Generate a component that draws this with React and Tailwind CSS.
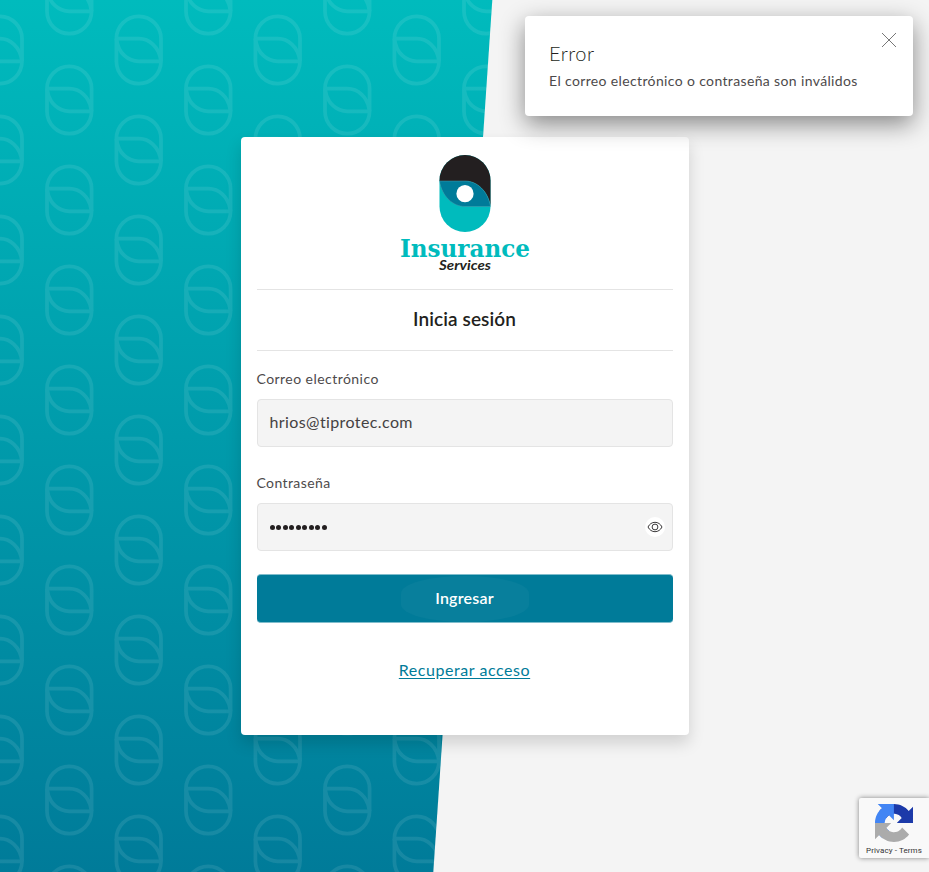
import React from "react";

function Link({ x, y }) {
  return (
    <g transform={`translate(${x} ${y})`}>
      <rect x="-22.3" y="-33.6" width="44.6" height="67.2" rx="22.3" />
      <path d="M-22.3 -11.3H0C10 -11.3 20.5 -4 22.3 11.3" />
      <path d="M22.3 11.3H0C-10 11.3 -20.5 4 -22.3 -11.3" />
    </g>
  );
}

function Backdrop() {
  return (
    <svg className="absolute inset-0 h-full w-full" viewBox="0 0 929 872" preserveAspectRatio="none" aria-hidden="true">
      <defs>
        <linearGradient id="teal" x1="0" y1="0" x2="0" y2="1">
          <stop offset="0" stopColor="#00bbbd" />
          <stop offset="1" stopColor="#007b99" />
        </linearGradient>
        <pattern id="links" x="0" y="0" width="139" height="100" patternUnits="userSpaceOnUse">
          <g fill="none" stroke="#fff" strokeWidth="3.7">
            <Link x={-0.3} y={50} />
            <Link x={138.7} y={50} />
            <Link x={69.3} y={0} />
            <Link x={69.3} y={100} />
          </g>
        </pattern>
      </defs>
      <path d="M0 0H492.300L433.300 872H0Z" fill="url(#teal)" />
      <path d="M0 0H492.300L433.300 872H0Z" fill="url(#links)" opacity="0.09" />
    </svg>
  );
}

function Logo() {
  return (
    <svg className="mx-auto block overflow-visible" width="134" height="120" viewBox="0 0 134 120" role="img" aria-label="Insurance Services">
      <defs>
        <clipPath id="pill">
          <rect x="41.500" y="2" width="51" height="77" rx="25.500" />
        </clipPath>
      </defs>
      <g clipPath="url(#pill)">
        <rect x="41" y="2" width="52" height="77" fill="#00bbbd" />
        <path d="M41 2H93V53.500C90 38 79 28 67 28H41Z" fill="#231f20" />
        <path d="M41 28H67C79 28 90 38 92.500 53.500H67C55 53.500 44 43.500 41.500 28Z" fill="#007b99" stroke="#4a9fae" strokeWidth="0.500" />
      </g>
      <circle cx="67" cy="40.700" r="8.600" fill="#fff" />
      <text x="2" y="104" textLength="130" lengthAdjust="spacingAndGlyphs" fill="#00bbbd" className="font-['DejaVu_Serif',serif] text-[25px] font-bold">Insurance</text>
      <text x="41" y="117" textLength="52" lengthAdjust="spacingAndGlyphs" fill="#231f20" className="font-['Lato',sans-serif] text-[12.5px] font-bold italic">Services</text>
    </svg>
  );
}

function EyeIcon() {
  return (
    <svg width="16" height="12" viewBox="0 0 16 12" fill="none" stroke="#3c3a3b" strokeWidth="1">
      <path d="M1 6C2.500 3 5 1.300 8 1.300S13.500 3 15 6C13.500 9 11 10.700 8 10.700S2.500 9 1 6Z" />
      <circle cx="8" cy="6" r="2.900" />
    </svg>
  );
}

function Toast() {
  return (
    <div className="absolute top-4 right-4 z-20 h-[100px] w-[388px] rounded bg-white px-6 pt-[23px] text-[#231f20] shadow-[0_8px_24px_rgba(0,0,0,0.45)]">
      <h2 className="text-[20px] leading-7 font-light tracking-[0.5px]">Error</h2>
      <p className="mt-px text-[14px] leading-[26px] whitespace-nowrap text-[#4d4a4b] tracking-[0.36px]">El correo electrónico o contraseña son inválidos</p>
      <button className="absolute top-4 right-4" aria-label="Cerrar">
        <svg width="16" height="16" viewBox="0 0 16 16" stroke="#777" strokeWidth="1">
          <path d="M1 1L15 15M15 1L1 15" />
        </svg>
      </button>
    </div>
  );
}

function Recaptcha() {
  return (
    <div className="absolute right-0 bottom-[14px] flex h-[60px] w-[70px] flex-col items-center rounded-l-[2px] bg-[#f9f9f9] pt-[6px] shadow-[0_0_5px_gray]">
      <svg width="38" height="38" viewBox="0 0 64 64">
        <path fill="#1c3aa9" d="M64 31.955l-.033-1.370V4.687l-7.160 7.160C50.948 4.674 42.033.093 32.050.093c-10.389 0-19.622 4.960-25.458 12.640l11.736 11.860a15.550 15.550 0 0 1 4.754-5.334c2.050-1.600 4.952-2.906 8.968-2.906.485 0 .860.057 1.135.163 4.976.393 9.288 3.140 11.828 7.124l-8.307 8.307L64 31.953" />
        <path fill="#4285f4" d="M31.862.094l-1.370.033H4.594l7.160 7.160C4.580 13.147 0 22.060 0 32.046c0 10.390 4.960 19.622 12.640 25.458L24.500 45.768a15.550 15.550 0 0 1-5.334-4.754c-1.600-2.050-2.906-4.952-2.906-8.968 0-.485.057-.860.163-1.135.393-4.976 3.140-9.288 7.124-11.828l8.307 8.307L31.860.095" />
        <path fill="#ababab" d="M.001 32.045l.033 1.370v25.898l7.160-7.160c5.860 7.173 14.774 11.754 24.760 11.754 10.390 0 19.622-4.960 25.458-12.640l-11.736-11.860a15.550 15.550 0 0 1-4.754 5.334c-2.050 1.600-4.952 2.906-8.968 2.906-.485 0-.860-.057-1.135-.163-4.976-.393-9.288-3.140-11.828-7.124l8.307-8.307c-10.522.040-22.400.066-27.295-.005" />
      </svg>
      <p className="mt-[3px] font-['Roboto',sans-serif] text-[8px] leading-[12px] tracking-[0.1px] whitespace-nowrap text-[#333]">Privacy - Terms</p>
    </div>
  );
}

export default function App() {
  return (
    <div className="relative flex h-screen w-screen items-center justify-center overflow-hidden bg-[#f4f4f4] font-['Lato',sans-serif]">
      <Backdrop />
      <main className="relative h-[598px] w-[448px] rounded bg-white px-4 pt-4 text-[#231f20] shadow-[0_8px_16px_rgba(0,0,0,0.15)]">
        <header className="h-[137px] border-b border-[#e4e4e4]">
          <Logo />
        </header>
        <h1 className="flex h-[61px] items-center justify-center border-b border-[#e4e4e4] pb-[2px] text-[19px] font-semibold tracking-[0.1px]">Inicia sesión</h1>
        <form className="flex flex-col">
          <span className="mt-4 text-[14px] leading-6 tracking-[0.45px] text-[#4d4a4b]">Correo electrónico</span>
          <div className="mt-2 flex h-12 items-center rounded border border-[#e4e4e4] bg-[#f4f4f4] px-3 pb-[2px] text-[16px] tracking-[0.4px] text-[#444142]">
            hrios@tiprotec.com
          </div>
          <span className="mt-6 text-[14px] leading-6 tracking-[0.4px] text-[#4d4a4b]">Contraseña</span>
          <div className="mt-2 flex h-12 items-center justify-between rounded border border-[#e4e4e4] bg-[#f4f4f4] pr-[7px] pl-3">
            <span className="flex gap-[1.450px] pl-[0.5px]" aria-label="Contraseña oculta">
              {Array.from({ length: 9 }, (_, i) => (
                <i key={i} className="size-[5px] rounded-full bg-[#231f20]" />
              ))}
            </span>
            <span className="flex size-5 items-center justify-center rounded-full bg-white"><EyeIcon /></span>
          </div>
          <button type="button" className="mt-[23px] flex h-[49px] items-center justify-center overflow-hidden rounded border-y border-[#80bdcc] bg-[#007b99] text-[16px] font-semibold tracking-[0.2px] text-white">
            <span className="flex h-[46px] w-32 items-center justify-center rounded-[50%/38%] bg-white/[0.03] pb-px">Ingresar</span>
          </button>
          <a className="mt-[35px] self-center text-[16px] leading-6 tracking-[0.55px] text-[#007b99] underline underline-offset-2">Recuperar acceso</a>
        </form>
      </main>
      <Toast />
      <Recaptcha />
    </div>
  );
}
